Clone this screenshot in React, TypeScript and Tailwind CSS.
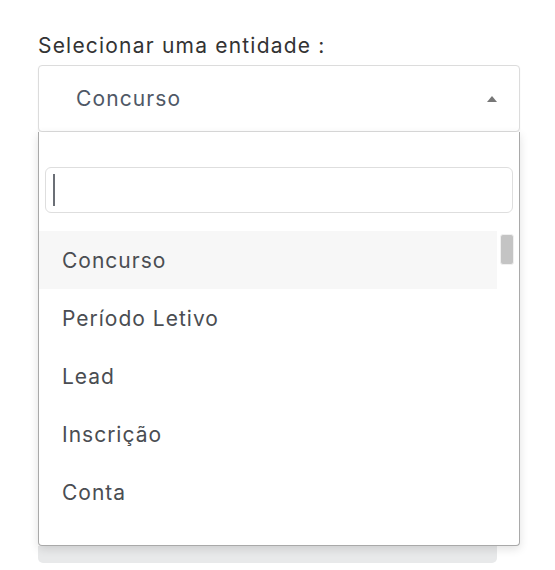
import { useState } from 'react';

const options = ['Concurso', 'Período Letivo', 'Lead', 'Inscrição', 'Conta'];

export default function App() {
  const [selected] = useState('Concurso');

  return (
    <div className="min-h-[570px] bg-white pt-[32px] font-['Inter','Noto_Sans',sans-serif]">
      <div className="ml-[38px] w-[482px]">
        <label className="block text-[21px] leading-[28px] tracking-[1.2px] text-[#333]">Selecionar uma entidade :</label>

        <div className="mt-[5px] flex h-[67px] items-center justify-between rounded-[4px] border border-[#dcdcdc] bg-white pl-[37px] pr-[22px] shadow-[0_1px_2px_rgba(0,0,0,0.06)]">
          <span className="text-[21px] tracking-[1.1px] text-[#4f5866]">{selected}</span>
          <svg width="10" height="6" viewBox="0 0 10 6" className="text-[#777]">
            <path d="M0 6 L5 0 L10 6 Z" fill="currentColor" />
          </svg>
        </div>

        <div className="relative">
          <div className="relative z-10 h-[414px] rounded-b-[4px] border border-t-0 border-[#a9a9a9] bg-white shadow-[0_3px_10px_rgba(0,0,0,0.12)]">
            <div className="px-[6px] pt-[35px]">
              <div className="flex h-[46px] items-center rounded-[6px] border border-[#dedede] px-[7px]">
                <div className="h-[32px] w-[2px] bg-[#6b6f76]" />
              </div>
            </div>

            <div className="mt-[18px] flex h-[314px] overflow-hidden">
              <ul className="w-[458px]">
                {options.map((o) => (
                  <li
                    key={o}
                    className={`flex h-[58px] items-center pl-[23px] pt-[2px] text-[21px] tracking-[1px] text-[#4a4d52] ${o === selected ? 'bg-[#f7f7f7]' : ''}`}
                  >
                    {o}
                  </li>
                ))}
              </ul>
              <div className="flex-1 pl-[3px] pt-[3px]">
                <div className="h-[31px] w-[14px] rounded-[3px] border border-[#f0f0f0] bg-[#c4c4c4]" />
              </div>
            </div>
          </div>
          <div className="h-[17px] w-[459px] rounded-b-[5px] bg-[#e8e9ea]" />
        </div>
      </div>
    </div>
  );
}
